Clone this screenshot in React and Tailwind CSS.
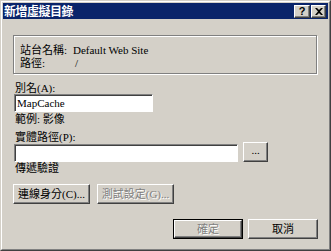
import React from 'react';

const font = "font-['Liberation_Serif','Noto_Sans_CJK_TC',serif]";

const Raised = ({ className = '', children }) => (
  <div className={`border-t border-l border-t-white border-l-white border-b border-r border-b-[#404040] border-r-[#404040] shadow-[inset_-1px_-1px_0_#808080] bg-[#d4d0c8] flex items-center justify-center ${className}`}>
    {children}
  </div>
);

const Button = ({ w, disabled, isDefault, children }) => {
  const text = disabled ? 'text-[#808080] [text-shadow:1px_1px_0_#fff]' : 'text-black';
  if (isDefault) {
    return (
      <div className={`${w} h-[20px] border border-black flex`}>
        <Raised className={`flex-1 ${text}`}>{children}</Raised>
      </div>
    );
  }
  return <Raised className={`${w} h-[20px] ${text}`}>{children}</Raised>;
};

const Field = ({ w, value }) => (
  <div className={`${w} h-[18px] bg-white border-t border-l border-t-[#808080] border-l-[#808080] border-b border-r border-b-white border-r-white shadow-[inset_1px_1px_0_#404040] flex items-center pl-[2px] text-[11px] leading-none`}>
    {value}
  </div>
);

export default function App() {
  return (
    <div className={`w-[331px] h-[251px] bg-[#d4d0c8] border border-t-[#d4d0c8] border-l-[#d4d0c8] border-b-[#404040] border-r-[#404040] ${font} text-black`}>
      <div className="h-full border border-t-white border-l-white border-b-[#808080] border-r-[#808080] p-[1px] flex flex-col">
        {/* title bar */}
        <div className="h-[16px] bg-[#0a246a] flex items-center pl-[1px] pr-[2px]">
          <span className="font-['Noto_Sans_CJK_TC',sans-serif] font-bold text-[12px] leading-none text-white tracking-[-0.5px]">新增虛擬目錄</span>
          <div className="ml-auto flex gap-[1px]">
            <Raised className="w-[16px] h-[13px] text-[11px] font-bold font-['Liberation_Sans',sans-serif] leading-none">?</Raised>
            <Raised className="w-[15px] h-[13px]">
              <svg width="8" height="7" viewBox="0 0 8 7">
                <path d="M0 0h2l2 2 2-2h2L5 3.5 8 7H6L4 5 2 7H0l3-3.5z" fill="#000" />
              </svg>
            </Raised>
          </div>
        </div>

        {/* site group */}
        <div className="ml-[10px] mt-[16px] w-[304px] h-[39px] border border-[#808080] shadow-[1px_1px_0_#fff,inset_1px_1px_0_#fff] pl-[6px] pt-[8px] text-[11px] leading-[13px]">
          <div className="flex">
            <span className="w-[53px]">站台名稱:</span>
            <span>Default Web Site</span>
          </div>
          <div className="flex">
            <span className="w-[53px]">路徑:</span>
            <span className="pl-[2px]">/</span>
          </div>
        </div>

        {/* alias */}
        <div className="ml-[12px] mt-[8px] text-[11px] leading-[12px]">別名(A):</div>
        <div className="ml-[11px]">
          <Field w="w-[139px]" value="MapCache" />
        </div>
        <div className="ml-[12px] mt-[1px] text-[11px] leading-[12px]">範例: 影像</div>

        {/* physical path */}
        <div className="ml-[12px] mt-[6px] text-[11px] leading-[12px]">實體路徑(P):</div>
        <div className="ml-[11px] mt-[-1px] flex items-start">
          <div className="mt-[2px]">
            <Field w="w-[224px]" value="" />
          </div>
          <div className="ml-[5px]">
            <Button w="w-[25px]">
              <span className="text-[11px] leading-none -mt-[3px]">...</span>
            </Button>
          </div>
        </div>
        <div className="ml-[12px] mt-[0px] text-[11px] leading-[12px]">傳遞驗證</div>

        {/* credentials */}
        <div className="ml-[10px] mt-[10px] flex gap-[7px] text-[11px] leading-none">
          <Button w="w-[77px]">連線身分(C)...</Button>
          <Button w="w-[77px]" disabled>測試設定(G)...</Button>
        </div>

        {/* ok / cancel */}
        <div className="mt-[15px] flex justify-end gap-[5px] pr-[10px] text-[11px] leading-none">
          <Button w="w-[70px]" disabled isDefault>確定</Button>
          <Button w="w-[70px]">取消</Button>
        </div>
      </div>
    </div>
  );
}
